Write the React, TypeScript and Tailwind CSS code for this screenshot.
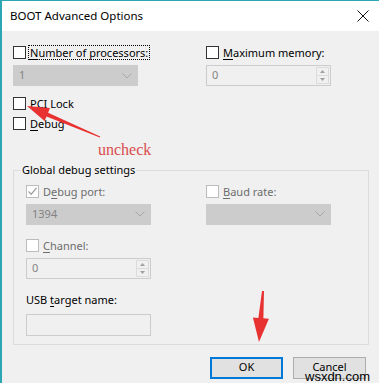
import type { ReactNode } from 'react';

const font = { fontFamily: '"Segoe UI", "Noto Sans", sans-serif' };

function Box({ disabled, checked }: { disabled?: boolean; checked?: boolean }) {
  return (
    <span
      className={`flex h-[13px] w-[13px] shrink-0 items-center justify-center border bg-white ${
        disabled ? 'border-[#bcbcbc]' : 'border-[#333333]'
      }`}
    >
      {checked && (
        <svg width="11" height="11" viewBox="0 0 11 11">
          <path d="M1.5 5.5 L4.2 8.2 L9.5 1.8" fill="none" stroke="#a0a0a0" strokeWidth="1.3" />
        </svg>
      )}
    </span>
  );
}

function Check({
  children,
  disabled,
  checked,
  focus,
}: {
  children: ReactNode;
  disabled?: boolean;
  checked?: boolean;
  focus?: boolean;
}) {
  return (
    <div className="flex h-[13px] items-center gap-[3px]">
      <Box disabled={disabled} checked={checked} />
      <span
        className={`px-[1px] leading-[13px] ${disabled ? 'text-[#6d6d6d]' : 'text-black'} ${
          focus ? 'outline outline-1 outline-dotted outline-black' : ''
        }`}
      >
        {children}
      </span>
    </div>
  );
}

function Chevron() {
  return (
    <svg width="10" height="6" viewBox="0 0 10 6">
      <path d="M0.5 0.5 L5 5 L9.5 0.5" fill="none" stroke="#a8a8a8" strokeWidth="1" />
    </svg>
  );
}

function Combo({ value }: { value?: string }) {
  return (
    <div className="flex h-[21px] w-[125px] items-center justify-between border border-[#cccccc] bg-[#cccccc] pl-[5px] pr-[5px] text-[#838383]">
      <span>{value}</span>
      <Chevron />
    </div>
  );
}

function Spin({ value }: { value: string }) {
  return (
    <div className="flex h-[21px] w-[125px] items-stretch border border-[#cccccc] bg-[#f0f0f0] text-[#838383]">
      <span className="flex flex-1 items-center pl-[5px]">{value}</span>
      <div className="my-[1px] mr-[1px] flex w-[13px] flex-col border border-[#dcdcdc]">
        <div className="flex flex-1 items-center justify-center border-b border-[#dcdcdc]">
          <svg width="5" height="3" viewBox="0 0 5 3">
            <path d="M0 3 L2.5 0 L5 3 Z" fill="#a0a0a0" />
          </svg>
        </div>
        <div className="flex flex-1 items-center justify-center">
          <svg width="5" height="3" viewBox="0 0 5 3">
            <path d="M0 0 L2.5 3 L5 0 Z" fill="#a0a0a0" />
          </svg>
        </div>
      </div>
    </div>
  );
}

export default function App() {
  return (
    <div
      className="relative h-[383px] w-[379px] overflow-hidden border-l-2 border-t border-[#2aa7b3] bg-[#f0f0f0] text-[11px] text-black"
      style={font}
    >
      {/* Title bar */}
      <div className="flex h-[30px] items-center justify-between bg-white pl-[8px] pr-[10px]">
        <span className="text-[11.5px]">BOOT Advanced Options</span>
        <svg width="12" height="12" viewBox="0 0 12 12">
          <path d="M0.5 0.5 L11.5 11.5 M11.5 0.5 L0.5 11.5" stroke="#111" strokeWidth="1" />
        </svg>
      </div>

      <div className="flex flex-col pl-[11px] pr-[11px]">
        <div className="mt-[15px] flex">
          <div className="flex w-[193px] flex-col">
            <Check focus>
              <span className="underline underline-offset-2">N</span>umber of processors:
            </Check>
            <div className="mt-[6px]">
              <Combo value="1" />
            </div>
          </div>
          <div className="flex flex-col">
            <Check>
              <span className="underline underline-offset-2">M</span>aximum memory:
            </Check>
            <div className="mt-[6px]">
              <Spin value="0" />
            </div>
          </div>
        </div>

        <div className="mt-[11px]">
          <Check>PCI Lock</Check>
        </div>
        <div className="mt-[7px]">
          <Check>
            <span className="underline underline-offset-2">D</span>ebug
          </Check>
        </div>

        {/* Global debug settings */}
        <fieldset className="mt-[32px] mr-[-1px] border border-[#dcdcdc] pb-[8px] pl-[7px]">
          <legend className="px-[1px] text-black">Global debug settings</legend>
          <div className="mt-[6px] flex pl-[5px]">
            <div className="flex w-[180px] flex-col">
              <Check disabled checked>
                D<span className="underline underline-offset-2">e</span>bug port:
              </Check>
              <div className="mt-[6px]">
                <Combo value="1394" />
              </div>
              <div className="mt-[14px]">
                <Check disabled>
                  <span className="underline underline-offset-2">C</span>hannel:
                </Check>
              </div>
              <div className="mt-[6px]">
                <Spin value="0" />
              </div>
              <span className="mt-[14px] leading-[13px]">
                USB <span className="underline underline-offset-2">t</span>arget name:
              </span>
              <div className="mt-[8px] h-[22px] w-[125px] border border-[#cccccc] bg-[#f0f0f0]" />
            </div>
            <div className="flex flex-col">
              <Check disabled>
                <span className="underline underline-offset-2">B</span>aud rate:
              </Check>
              <div className="mt-[6px]">
                <Combo />
              </div>
            </div>
          </div>
        </fieldset>

        <div className="mt-[12px] flex justify-end gap-[10px] pr-[2px]">
          <button className="h-[22px] w-[73px] border-2 border-[#0078d7] bg-[#e1e1e1] text-black">OK</button>
          <button className="h-[22px] w-[73px] border border-[#adadad] bg-[#e1e1e1] text-black">Cancel</button>
        </div>
      </div>

      {/* annotations */}
      <svg className="pointer-events-none absolute left-[-2px] top-[-1px]" width="379" height="383">
        <polygon
          points="27,106 50,108.1 48.1,112.8 100.2,136.5 99.8,137.5 46.5,116.4 44.6,121.1"
          fill="#e83232"
        />
        <polygon
          points="259,342 268.9,318.7 263.4,318.3 264,291 262,291 258.4,317.9 252.9,317.5"
          fill="#e83232"
        />
      </svg>
      <span
        className="absolute left-[96px] top-[137px] text-[16px] text-[#d94c4c]"
        style={{ fontFamily: '"Liberation Serif", serif' }}
      >
        uncheck
      </span>
      <span
        className="absolute left-[303px] top-[366px] text-[13px] text-black"
        style={{ fontFamily: '"Liberation Sans", sans-serif' }}
      >
        wsxdn.com
      </span>
    </div>
  );
}
